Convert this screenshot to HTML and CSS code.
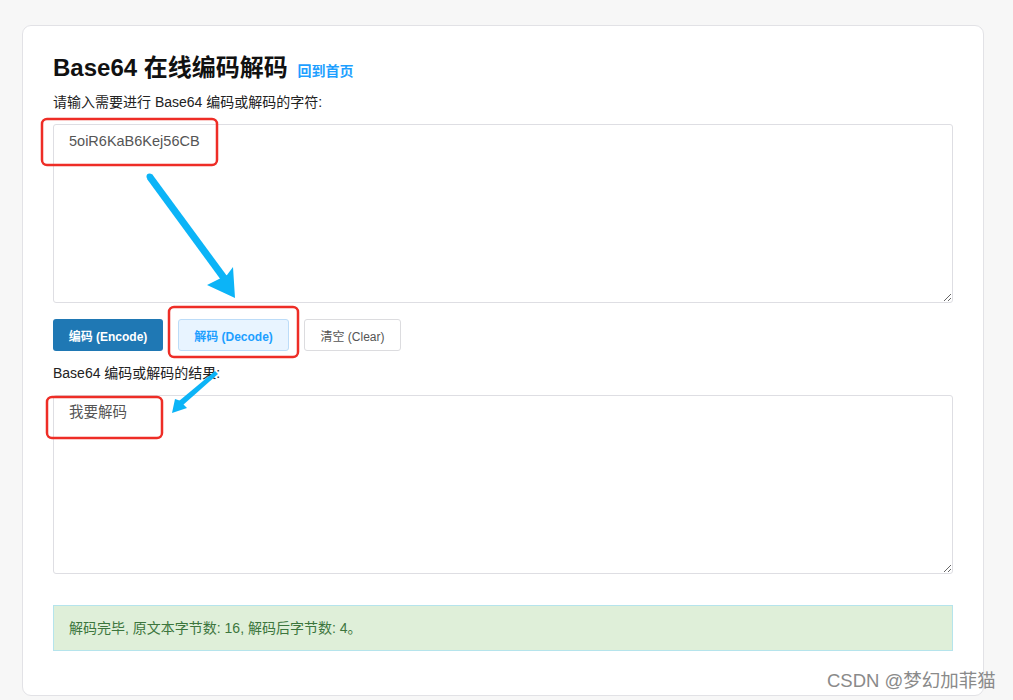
FILE: index.html
```html
<!DOCTYPE html>
<html lang="zh">
<head>
<meta charset="utf-8">
<title>Base64 在线编码解码</title>
<link rel="stylesheet" href="styles.css">
</head>
<body>
<div class="card">
  <h1 class="title">Base64 在线编码解码 <a class="home" href="#">回到首页</a></h1>
  <div class="label">请输入需要进行 Base64 编码或解码的字符:</div>
  <textarea class="box">5oiR6KaB6Kej56CB</textarea>
  <div class="actions">
    <button class="btn btn-primary">编码 (Encode)</button>
    <button class="btn btn-light">解码 (Decode)</button>
    <button class="btn btn-plain">清空 (Clear)</button>
  </div>
  <div class="label label2">Base64 编码或解码的结果:</div>
  <textarea class="box">我要解码</textarea>
  <div class="alert">解码完毕, 原文本字节数: 16, 解码后字节数: 4。</div>
</div>
<svg class="marks" width="1013" height="700" viewBox="0 0 1013 700">
  <g fill="none" stroke="#ee2d26" stroke-width="2.5">
    <rect x="42" y="119" width="175" height="46" rx="5"/>
    <rect x="169" y="307" width="129" height="50" rx="5"/>
    <rect x="47" y="397" width="115" height="41" rx="5"/>
  </g>
  <g fill="#0cb4f7">
    <polygon points="147,179 152,174 227,276 221,280"/>
    <circle cx="149.5" cy="176.5" r="3"/>
    <polygon points="235,298 207,285 221,278 227,275 233,267"/>
    <polygon points="215,371 218,374 183,405 179,401"/>
    <polygon points="172,413 175,399 181,401 183,404 187,408"/>
  </g>
</svg>
<div class="watermark">CSDN @梦幻加菲猫</div>
</body>
</html>
```
FILE: styles.css
```css
html, body {
  margin: 0;
  padding: 0;
}
body {
  background: #f7f7f7;
  font-family: "Liberation Sans", "Noto Sans CJK SC", sans-serif;
  color: #222;
  width: 1013px;
  height: 700px;
  overflow: hidden;
  position: relative;
}
.card {
  margin: 25px 0 0 22px;
  width: 900px;
  background: #fff;
  border: 1px solid #e2e2e6;
  border-radius: 9px;
  padding: 28px 30px 44px 30px;
}
.title {
  margin: 0;
  height: 28px;
  font-size: 24px;
  line-height: 28px;
  font-weight: bold;
  color: #111;
}
.home {
  font-size: 14px;
  line-height: 14px;
  color: #1e9fff;
  text-decoration: none;
  font-weight: bold;
  margin-left: 3px;
}
.label {
  margin-top: 10px;
  height: 20px;
  font-size: 14px;
  line-height: 20px;
  color: #222;
}
.label2 {
  margin-top: 12px;
}
.box {
  display: block;
  box-sizing: border-box;
  margin-top: 12px;
  width: 900px;
  height: 179px;
  border: 1px solid #dedee3;
  border-radius: 3px;
  padding: 6px 15px;
  font-family: "Liberation Sans", "Noto Sans CJK SC", sans-serif;
  font-size: 14.5px;
  line-height: 20px;
  color: #555;
  resize: vertical;
  outline: none;
}
.actions {
  display: flex;
  gap: 15px;
  margin-top: 16px;
}
.btn {
  height: 32px;
  box-sizing: border-box;
  border-radius: 3px;
  font-family: "Liberation Sans", "Noto Sans CJK SC", sans-serif;
  font-size: 12px;
  padding: 0;
  white-space: nowrap;
  border: 1px solid transparent;
}
.btn-primary {
  background: #1f78b4;
  color: #fff;
  font-weight: bold;
  width: 110px;
}
.btn-light {
  background: #e8f4ff;
  border-color: #bcdcf8;
  color: #1e9fff;
  font-weight: bold;
  width: 111px;
}
.btn-plain {
  background: #fff;
  border-color: #dcdcdf;
  color: #555;
  width: 97px;
}
.alert {
  margin-top: 31px;
  height: 46px;
  box-sizing: border-box;
  background: #dfefd9;
  border: 1px solid #b5e4ec;
  color: #3c763d;
  font-size: 14px;
  line-height: 44px;
  padding: 0 15px;
}
.marks {
  position: absolute;
  left: 0;
  top: 0;
  pointer-events: none;
}
.watermark {
  position: absolute;
  left: 827px;
  top: 668px;
  font-size: 18.5px;
  line-height: 26px;
  color: #8a8a8a;
  text-shadow: 0 0 1px #fff;
  white-space: nowrap;
}
```
